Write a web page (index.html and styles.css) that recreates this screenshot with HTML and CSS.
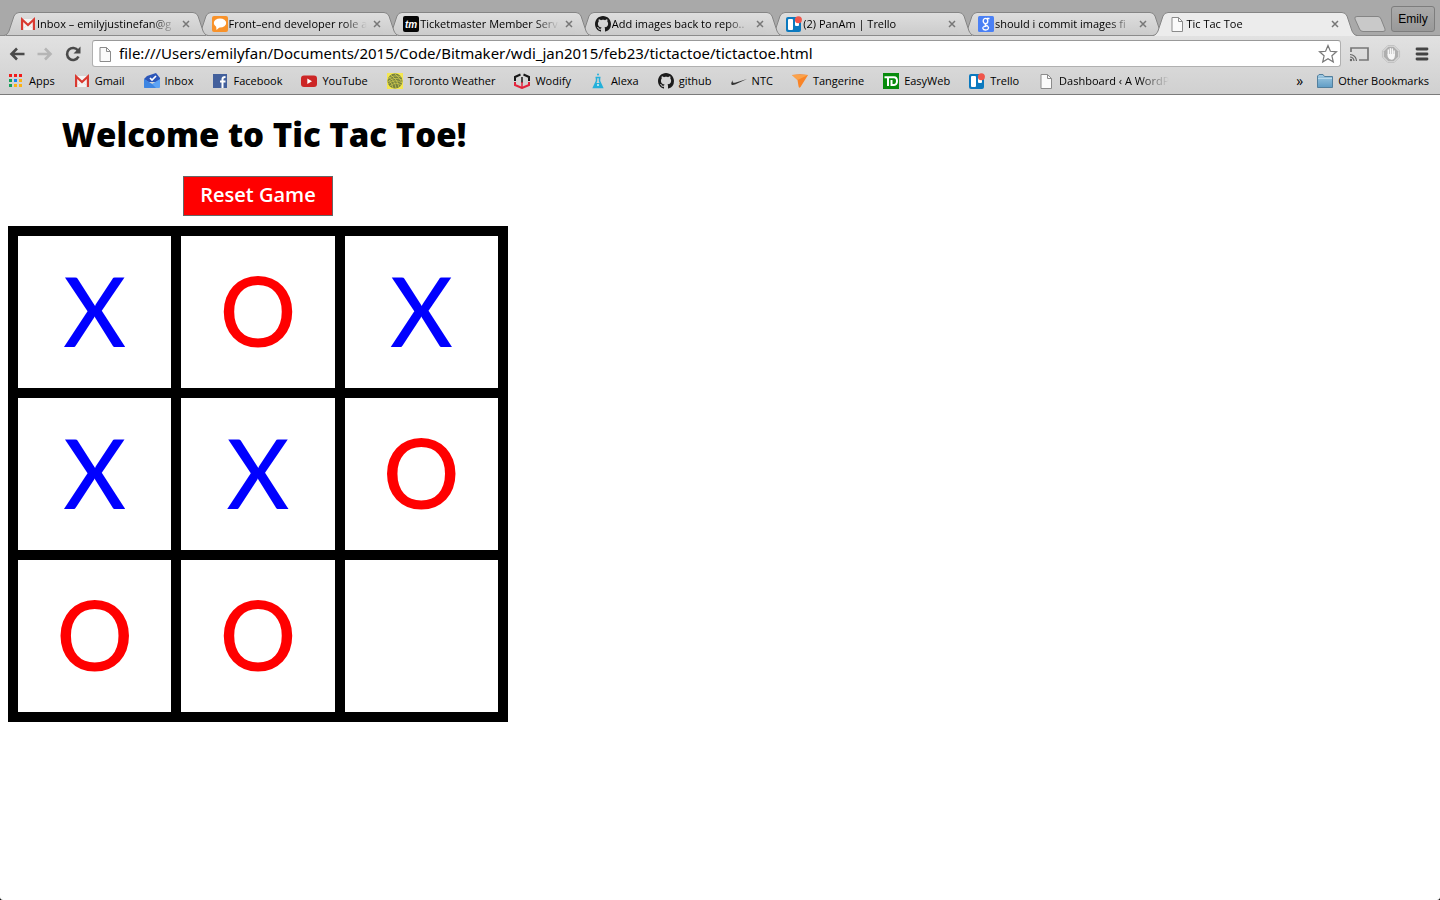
FILE: index.html
```html
<!DOCTYPE html>
<html lang="en">
<head>
<meta charset="utf-8">
<title>Tic Tac Toe</title>
<link rel="stylesheet" href="styles.css">
</head>
<body>
<svg class="defs" width="0" height="0" aria-hidden="true">
  <defs>
    <linearGradient id="tabfill" x1="0" y1="0" x2="0" y2="1"><stop offset="0" stop-color="#dedede"/><stop offset="1" stop-color="#cbcbcb"/></linearGradient>
    <linearGradient id="folderfill" x1="0" y1="0" x2="0" y2="1"><stop offset="0" stop-color="#a3cbe3"/><stop offset="1" stop-color="#5f9cc4"/></linearGradient>
    <symbol id="edge-l" viewBox="0 0 16 24"><path d="M0 24C3 23 4 21 5 19L10 4Q11.500 .5 15 .5H16V24Z"/><path d="M2 23.500H16" class="edge-base"/><path d="M0 23.500C3 23 4 21 5 19L10 4Q11.500 .5 15 .5H16" fill="none" stroke="#858585"/></symbol>
    <symbol id="edge-r" viewBox="0 0 16 24"><path d="M16 24C13 23 12 21 11 19L6 4Q4.500 .5 1 .5H0V24Z"/><path d="M0 23.500H14" class="edge-base"/><path d="M16 23.500C13 23 12 21 11 19L6 4Q4.500 .5 1 .5H0" fill="none" stroke="#858585"/></symbol>
    <symbol id="gmail" viewBox="0 0 16 16"><path d="M1 3H15V14H1Z" fill="#f4f4f4"/><path d="M2.100 14V3.500L8 9L13.900 3.500V14" fill="none" stroke="#d93a31" stroke-width="2.200"/><path d="M3 13L7 9M13 13L9 9" stroke="#ddd" stroke-width=".7"/></symbol>
    <symbol id="chat" viewBox="0 0 16 16"><rect width="16" height="16" rx="2" fill="#f8922a"/><ellipse cx="8" cy="7" rx="6.200" ry="4.500" fill="#fff"/><path d="M4 9L4.500 14L9 10Z" fill="#fff"/></symbol>
    <symbol id="tm" viewBox="0 0 16 16"><rect width="16" height="16" rx="2" fill="#050505"/><text x="8" y="11.500" text-anchor="middle" font-family="Liberation Sans, sans-serif" font-size="10" font-weight="700" font-style="italic" fill="#fff">tm</text></symbol>
    <symbol id="octocat" viewBox="0 0 16 16"><path fill="#1b1b1b" d="M8 0C3.580 0 0 3.580 0 8c0 3.540 2.290 6.530 5.470 7.590.4.070.55-.17.55-.38 0-.19-.01-.82-.01-1.490-2.010.37-2.530-.49-2.690-.94-.09-.23-.48-.94-.82-1.130-.28-.15-.68-.52-.01-.53.63-.01 1.080.58 1.230.82.72 1.210 1.870.87 2.330.66.07-.52.28-.87.51-1.070-1.780-.2-3.640-.89-3.640-3.950 0-.87.31-1.590.82-2.150-.08-.2-.36-1.020.08-2.120 0 0 .67-.21 2.200.82.64-.18 1.320-.27 2-.27s1.360.09 2 .27c1.530-1.040 2.200-.82 2.200-.82.44 1.100.16 1.920.08 2.120.51.56.82 1.270.82 2.150 0 3.070-1.870 3.750-3.650 3.950.29.25.54.73.54 1.480 0 1.070-.01 1.930-.01 2.200 0 .21.15.46.55.38A8 8 0 0 0 16 8c0-4.420-3.580-8-8-8z"/></symbol>
    <symbol id="trello" viewBox="0 0 16 16"><rect y="1" width="15" height="15" rx="2" fill="#0b79bf"/><rect x="2" y="3" width="5" height="11" rx="1" fill="#fff"/><rect x="9" y="4" width="4" height="6" rx="1" fill="#fff"/><circle cx="12.400" cy="3.700" r="3.500" fill="#f0564b"/></symbol>
    <symbol id="google" viewBox="0 0 16 16"><rect width="16" height="16" rx="1.500" fill="#4a80f5"/><g fill="none" stroke="#fff" stroke-width="1.300"><ellipse cx="7.500" cy="5" rx="2.300" ry="2.600"/><path d="M9 2.500H11.500M8 7.500C6 8.800 8 9 9.500 10C12 12.300 9.500 14 7.500 14C4.500 14 4 11.300 6 10.500L8.500 10"/></g></symbol>
    <symbol id="page" viewBox="0 0 16 16"><path d="M3 1.500H9.500L13.500 5.500V15.500H3Z" fill="#fafafa" stroke="#8b8b8b"/><path d="M9.500 1.500V5.500H13.500" fill="none" stroke="#8b8b8b"/></symbol>
    <symbol id="apps" viewBox="0 0 16 16"><path d="M1 1h3v3H1zM6 1h3v3H6z" fill="#f21c1c"/><path d="M11 1h3v3h-3z" fill="#f21c1c"/><path d="M1 6h3v3H1zM1 11h3v3H1z" fill="#16a05a"/><path d="M6 6h3v3H6z" fill="#1684f5"/><path d="M11 6h3v3h-3zM6 11h3v3H6zM11 11h3v3h-3z" fill="#fbb214"/></symbol>
    <symbol id="inbox" viewBox="0 0 16 16"><path d="M0 6L3 3L12 0L16 5V9H0Z" fill="#2c56b8"/><path d="M0 6L8 11L16 6V14Q16 15 15 15H1Q0 15 0 14Z" fill="#5da3f5"/><path d="M0 6L8 11L12 15H1Q0 15 0 14Z" fill="#3d85e2"/><path d="M6 5L8 7L12 3" fill="none" stroke="#fff" stroke-width="1.700"/></symbol>
    <symbol id="facebook" viewBox="0 0 16 16"><rect x="1" y="1" width="14" height="14" fill="#43609c"/><path d="M10.500 15V9.500M10.500 10V6Q10.500 4 13.500 4M8 8.500H13.500" fill="none" stroke="#fff" stroke-width="2"/></symbol>
    <symbol id="youtube" viewBox="0 0 16 16"><rect y="2.500" width="16" height="11.500" rx="3" fill="#cc2626"/><path d="M6.300 5.500L11 8.200L6.300 11Z" fill="#fff"/></symbol>
    <symbol id="weather" viewBox="0 0 16 16"><rect width="16" height="16" fill="#f4e751"/><circle cx="8" cy="8" r="7.500" fill="#77823d"/><path d="M1 6Q7 1 14 4M1 9Q7 3 15 7M1 11Q8 5 15 10M3 13Q9 8 14 12M4 2Q11 7 12 14M2 4Q8 8 9 15M8 1Q14 6 15 10M2 7Q5 10 6 15" fill="none" stroke="#d6cf50" stroke-width=".7"/></symbol>
    <symbol id="wodify" viewBox="0 0 16 16"><path d="M1 8V4L6.500 1.500M9.500 1.500L15 4V8" fill="none" stroke="#171717" stroke-width="2"/><path d="M1 9V12L8 15L15 12V9" fill="none" stroke="#e3233c" stroke-width="2"/><path d="M8 4V10" stroke="#171717" stroke-width="1.500"/><path d="M8 9V15" stroke="#e3233c" stroke-width="1.500"/></symbol>
    <symbol id="alexa" viewBox="0 0 16 16"><path d="M6.500 4V8L3.500 14.500H12.500L9.500 8V4M5.500 4.500H10.500" fill="none" stroke="#24b0da" stroke-width="1.500"/><path d="M5.500 10H10.500L12 14H4Z" fill="#24b0da"/><circle cx="8" cy="1.500" r="1" fill="#24b0da"/><circle cx="8" cy="12" r="1" fill="#d9f3fa"/></symbol>
    <symbol id="nike" viewBox="0 0 16 16"><path d="M2 7C-1 11 0 13 4 11.500L16 6L4 9.700C2 10.200 1 9 2 7Z" fill="#333"/></symbol>
    <symbol id="tangerine" viewBox="0 0 16 16"><path d="M0 2Q8 .5 16 2L8.500 14Q7 16 6.500 13L5.500 7Z" fill="#f98427"/><path d="M0 2L5.500 7L16 2" fill="#fba24a"/></symbol>
    <symbol id="td" viewBox="0 0 16 16"><rect width="16" height="16" fill="#078b0c"/><path d="M1.500 4.200H11Q14 4.200 14 8T11 12H8.500V7M5 4.200V13" fill="none" stroke="#fff" stroke-width="2"/></symbol>
    <symbol id="folder" viewBox="0 0 16 16"><path d="M.5 14.500V3L2 1.500H6L7.500 3.500H15.500V14.500Z" fill="url(#folderfill)" stroke="#527f9d"/><path d="M1 5.500H15" stroke="#b9d9eb"/></symbol>
  </defs>
</svg>

<header class="browser">
  <div class="strip">
    <nav class="tabs" aria-label="Tabs">
      <div class="tab"><svg class="edge"><use href="#edge-l"/></svg><div class="tab-body"><svg class="icon"><use href="#gmail"/></svg><span class="tab-title">Inbox – emilyjustinefan@g</span><button class="close" aria-label="Close tab"><svg viewBox="0 0 8 8"><path d="M1 1L7 7M7 1L1 7"/></svg></button></div><svg class="edge"><use href="#edge-r"/></svg></div>
      <div class="tab"><svg class="edge"><use href="#edge-l"/></svg><div class="tab-body"><svg class="icon"><use href="#chat"/></svg><span class="tab-title">Front–end developer role a</span><button class="close" aria-label="Close tab"><svg viewBox="0 0 8 8"><path d="M1 1L7 7M7 1L1 7"/></svg></button></div><svg class="edge"><use href="#edge-r"/></svg></div>
      <div class="tab"><svg class="edge"><use href="#edge-l"/></svg><div class="tab-body"><svg class="icon"><use href="#tm"/></svg><span class="tab-title">Ticketmaster Member Serv</span><button class="close" aria-label="Close tab"><svg viewBox="0 0 8 8"><path d="M1 1L7 7M7 1L1 7"/></svg></button></div><svg class="edge"><use href="#edge-r"/></svg></div>
      <div class="tab"><svg class="edge"><use href="#edge-l"/></svg><div class="tab-body"><svg class="icon"><use href="#octocat"/></svg><span class="tab-title">Add images back to repo..</span><button class="close" aria-label="Close tab"><svg viewBox="0 0 8 8"><path d="M1 1L7 7M7 1L1 7"/></svg></button></div><svg class="edge"><use href="#edge-r"/></svg></div>
      <div class="tab"><svg class="edge"><use href="#edge-l"/></svg><div class="tab-body"><svg class="icon"><use href="#trello"/></svg><span class="tab-title">(2) PanAm | Trello</span><button class="close" aria-label="Close tab"><svg viewBox="0 0 8 8"><path d="M1 1L7 7M7 1L1 7"/></svg></button></div><svg class="edge"><use href="#edge-r"/></svg></div>
      <div class="tab"><svg class="edge"><use href="#edge-l"/></svg><div class="tab-body"><svg class="icon"><use href="#google"/></svg><span class="tab-title">should i commit images fi</span><button class="close" aria-label="Close tab"><svg viewBox="0 0 8 8"><path d="M1 1L7 7M7 1L1 7"/></svg></button></div><svg class="edge"><use href="#edge-r"/></svg></div>
      <div class="tab active"><svg class="edge"><use href="#edge-l"/></svg><div class="tab-body"><svg class="icon"><use href="#page"/></svg><span class="tab-title">Tic Tac Toe</span><button class="close" aria-label="Close tab"><svg viewBox="0 0 8 8"><path d="M1 1L7 7M7 1L1 7"/></svg></button></div><svg class="edge"><use href="#edge-r"/></svg></div>
    </nav>
    <button class="new-tab" aria-label="New tab"><svg viewBox="0 0 32 16"><path d="M3 .5H24Q26 .5 27 3L31 13Q32 15.500 29 15.500H9Q6.500 15.500 5.500 13L1 3Q0 .5 3 .5Z" fill="#c9c9c9" stroke="#858585"/></svg></button>
    <button class="user">Emily</button>
  </div>

  <div class="toolbar">
    <button class="tool" aria-label="Back"><svg viewBox="0 0 16 16"><path d="M15.500 8H3M8 2.500L2.500 8L8 13.500" fill="none" stroke="#4a4a4a" stroke-width="2.600"/></svg></button>
    <button class="tool" aria-label="Forward"><svg viewBox="0 0 16 16"><path d="M.5 8H13M8 2.500L13.500 8L8 13.500" fill="none" stroke="#b5b5b5" stroke-width="2.600"/></svg></button>
    <button class="tool" aria-label="Reload"><svg viewBox="0 0 16 16"><path d="M13 4.500A6 6 0 1 0 13.500 10.500" fill="none" stroke="#4a4a4a" stroke-width="2.600"/><path d="M15.500 .5V7.500H8.500Z" fill="#4a4a4a"/></svg></button>
    <div class="omnibox">
      <svg class="icon"><use href="#page"/></svg>
      <input class="url" type="text" aria-label="Address" value="file:///Users/emilyfan/Documents/2015/Code/Bitmaker/wdi_jan2015/feb23/tictactoe/tictactoe.html">
      <button class="star" aria-label="Bookmark this page"><svg viewBox="0 0 20 20"><path d="M10 1.500L12.400 7.300L18.500 7.800L13.900 11.800L15.300 18L10 14.700L4.700 18L6.100 11.800L1.500 7.800L7.600 7.300Z" fill="#fff" stroke="#777" stroke-width="1.200"/></svg></button>
    </div>
    <button class="tool ext" aria-label="Cast"><svg viewBox="0 0 20 16"><path d="M2 6V2H19V14H10" fill="none" stroke="#777" stroke-width="1.700"/><path d="M1 8.500A6.500 6.500 0 0 1 7.500 15M1 11A4 4 0 0 1 5 15" fill="none" stroke="#666" stroke-width="1.200"/><circle cx="2" cy="14" r="1.200" fill="#666"/></svg></button>
    <button class="tool ext" aria-label="Ad blocker"><svg viewBox="0 0 20 20"><path d="M6.500 .5H13.500L19.500 6.500V13.500L13.500 19.500H6.500L.5 13.500V6.500Z" fill="#dcdcdc" stroke="#bdbdbd"/><path d="M7 2H13L18 7V13L13 18H7L2 13V7Z" fill="#aeaeae"/><path d="M7 11V5.500M9.300 10V4M11.500 10V4.500M13.500 11V6.500" stroke="#f5f5f5" stroke-width="1.600" stroke-linecap="round"/><path d="M6.300 10H14.300V12Q14 16.500 10.500 16.500Q8 16.500 6.300 13Z" fill="#f5f5f5"/></svg></button>
    <button class="tool menu" aria-label="Menu"><svg viewBox="0 0 14 14"><path d="M2 2H12M2 7H12M2 12H12" stroke="#444" stroke-width="2.800" stroke-linecap="round"/></svg></button>
  </div>

  <nav class="bookmarks" aria-label="Bookmarks">
    <a href="#"><svg class="icon"><use href="#apps"/></svg>Apps</a>
    <a href="#"><svg class="icon"><use href="#gmail"/></svg>Gmail</a>
    <a href="#"><svg class="icon"><use href="#inbox"/></svg>Inbox</a>
    <a href="#"><svg class="icon"><use href="#facebook"/></svg>Facebook</a>
    <a href="#"><svg class="icon"><use href="#youtube"/></svg>YouTube</a>
    <a href="#"><svg class="icon"><use href="#weather"/></svg>Toronto Weather</a>
    <a href="#"><svg class="icon"><use href="#wodify"/></svg>Wodify</a>
    <a href="#"><svg class="icon"><use href="#alexa"/></svg>Alexa</a>
    <a href="#"><svg class="icon"><use href="#octocat"/></svg>github</a>
    <a href="#"><svg class="icon"><use href="#nike"/></svg>NTC</a>
    <a href="#"><svg class="icon"><use href="#tangerine"/></svg>Tangerine</a>
    <a href="#"><svg class="icon"><use href="#td"/></svg>EasyWeb</a>
    <a href="#"><svg class="icon"><use href="#trello"/></svg>Trello</a>
    <a href="#"><svg class="icon"><use href="#page"/></svg><span class="clip">Dashboard ‹ A WordP</span></a>
    <button class="more" aria-label="More bookmarks">»</button>
    <a href="#" class="other"><svg class="icon"><use href="#folder"/></svg>Other Bookmarks</a>
  </nav>
</header>

<main class="game">
  <h1 class="title">Welcome to Tic Tac Toe!</h1>
  <button class="reset">Reset Game</button>
  <div class="board">
    <button class="cell x">X</button>
    <button class="cell o">O</button>
    <button class="cell x">X</button>
    <button class="cell x">X</button>
    <button class="cell x">X</button>
    <button class="cell o">O</button>
    <button class="cell o">O</button>
    <button class="cell o">O</button>
    <button class="cell" aria-label="Empty square"></button>
  </div>
</main>
</body>
</html>
```
FILE: styles.css
```css
* { box-sizing: border-box; }

html { background: #000; }

body {
  margin: 0;
  min-height: 100vh;
  background: #fff;
  border-radius: 0 0 3px 3px;
  font-family: "Open Sans", "Noto Sans", sans-serif;
  color: #000;
}

button {
  margin: 0;
  padding: 0;
  border: 0;
  background: none;
  font: inherit;
  color: inherit;
}

svg { display: block; }

.defs { position: absolute; }

.icon {
  flex: none;
  width: 16px;
  height: 16px;
}

/* Tab strip */
.browser {
  font-size: 11px;
  font-weight: 500;
  border-bottom: 1px solid #7b7b7b;
  background: linear-gradient(#ececec, #d0d0d0);
}

.strip {
  display: flex;
  align-items: flex-start;
  height: 36px;
  padding: 0 5px 0 4px;
  background: #a9a9a9;
  border-bottom: 1px solid #8b8b8b;
}

.tabs {
  display: flex;
  flex: 0 1 1356px;
  min-width: 0;
  padding-top: 12px;
}

.tab {
  --base: #8b8b8b;
  display: flex;
  flex: 1 1 204px;
  min-width: 0;
  height: 24px;
  margin-right: -12px;
  position: relative;
}

.tab:nth-child(1) { z-index: 6; }
.tab:nth-child(2) { z-index: 5; }
.tab:nth-child(3) { z-index: 4; }
.tab:nth-child(4) { z-index: 3; }
.tab:nth-child(5) { z-index: 2; }
.tab:nth-child(6) { z-index: 1; }

.tab.active {
  --base: #ececec;
  z-index: 7;
  margin-right: 0;
}

.edge {
  flex: none;
  width: 16px;
  height: 24px;
  fill: url(#tabfill);
}

.edge-base { stroke: var(--base); }

.active .edge { fill: #ececec; }

.tab-body {
  display: flex;
  align-items: center;
  flex: 1;
  min-width: 0;
  border-top: 1px solid #858585;
  border-bottom: 1px solid var(--base);
  background: linear-gradient(#dedede, #cbcbcb);
}

.active .tab-body { background: #ececec; }

.tab-title {
  flex: 1;
  min-width: 0;
  margin-left: 1px;
  overflow: hidden;
  white-space: nowrap;
  font-size: 11px;
  line-height: 16px;
  -webkit-mask-image: linear-gradient(to right, #000 calc(100% - 24px), transparent);
  mask-image: linear-gradient(to right, #000 calc(100% - 24px), transparent);
}

.close {
  flex: none;
  margin: 0 2px 0 6px;
}

.close svg {
  width: 8px;
  height: 8px;
  fill: none;
  stroke: #777;
  stroke-width: 1.5;
}

.new-tab { margin: 16px 5px 0 -3px; }

.new-tab svg {
  width: 32px;
  height: 16px;
}

.user {
  flex: none;
  width: 44px;
  height: 26px;
  margin: 6px 0 0 auto;
  border: 1px solid #7d7d7d;
  border-radius: 3px;
  background: linear-gradient(#aaa, #999);
  font-family: "Liberation Sans", Arial, sans-serif;
  font-size: 12px;
  font-weight: 400;
}

/* Address row */
.toolbar {
  display: flex;
  align-items: center;
  gap: 12px;
  padding: 4px 11px 0 9px;
}

.tool svg {
  width: 16px;
  height: 16px;
}

.omnibox {
  display: flex;
  align-items: center;
  flex: 1;
  min-width: 0;
  height: 27px;
  margin: 0 -4px 0 -1px;
  padding: 0 2px 0 4px;
  border: 1px solid #b0b0b0;
  border-top-color: #999;
  border-radius: 3px;
  background: #fff;
}

.url {
  flex: 1;
  min-width: 0;
  margin: 0 0 0 6px;
  padding: 0 0 2px;
  border: 0;
  outline: 0;
  background: none;
  font-family: "Noto Sans", sans-serif;
  font-size: 15px;
  color: #000;
}

.star svg {
  width: 20px;
  height: 20px;
}

.ext svg {
  width: 20px;
  height: 18px;
}

.menu { margin-left: 2px; }

.menu svg {
  width: 14px;
  height: 14px;
}

/* Bookmarks bar */
.bookmarks {
  display: flex;
  align-items: center;
  gap: 19px;
  height: 27px;
  padding: 0 11px 0 8px;
  white-space: nowrap;
}

.bookmarks a {
  display: flex;
  align-items: center;
  gap: 5px;
  color: inherit;
  text-decoration: none;
}

.clip {
  -webkit-mask-image: linear-gradient(to right, #000 80px, transparent);
  mask-image: linear-gradient(to right, #000 80px, transparent);
}

.more {
  margin-left: auto;
  margin-right: -5px;
  font-size: 14px;
}

/* Game */
.game {
  display: flex;
  flex-direction: column;
  align-items: center;
  width: 500px;
  max-width: 100%;
  margin-left: 8px;
  padding-top: 20px;
}

.title {
  margin: 0 0 21px;
  padding-left: 12px;
  font-size: 33px;
  font-weight: 800;
  line-height: 40px;
}

.reset {
  width: 150px;
  height: 40px;
  margin-bottom: 10px;
  border: 1px solid #666;
  background: #f00;
  color: #fff;
  font-size: 20px;
  font-weight: 600;
  line-height: 36px;
  padding-bottom: 2px;
}

.board {
  display: grid;
  grid-template-columns: repeat(3, 1fr);
  gap: 10px;
  width: 100%;
  padding: 10px;
  background: #000;
}

.cell {
  height: 152px;
  padding-bottom: 4px;
  background: #fff;
  font-family: Lato, sans-serif;
  font-size: 96px;
  font-weight: 500;
  line-height: 148px;
}

.x { color: #00f; }
.o { color: #f00; }
```
